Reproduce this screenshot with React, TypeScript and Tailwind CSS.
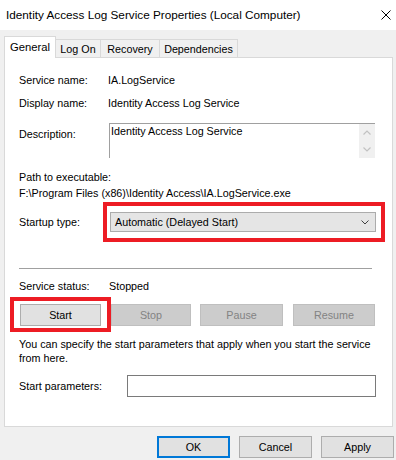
function Btn({ label, disabled, primary, w }: { label: string; disabled?: boolean; primary?: boolean; w: string }) {
  return (
    <div
      className={`h-[22px] ${w} flex items-center justify-center ${
        disabled
          ? 'bg-[#cccccc] border border-[#bfbfbf] text-[#838383]'
          : primary
            ? 'bg-[#e1e1e1] border-2 border-[#0078d7] text-black'
            : 'bg-[#e1e1e1] border border-[#adadad] text-black'
      }`}
    >
      {label}
    </div>
  );
}

export default function App() {
  const row = 'flex items-center h-[16px]';
  return (
    <div className="w-[396px] h-[460px] bg-[#f0f0f0] flex flex-col font-['Liberation_Sans',sans-serif] text-[10.75px] text-black leading-[16px]">
      {/* Barra de título */}
      <div className="h-[30px] bg-white flex items-center justify-between pl-[6px] pr-[5px]">
        <span className="text-[11.75px]">Identity Access Log Service Properties (Local Computer)</span>
        <svg width="10" height="10" viewBox="0 0 10 10">
          <path d="M0.5 0.5 L9.5 9.5 M9.5 0.5 L0.5 9.5" stroke="#000" strokeWidth="1" />
        </svg>
      </div>

      {/* Abas */}
      <div className="flex items-end pl-[4px] mt-[6px] h-[22px] relative z-10">
        <div className="w-[52px] h-[22px] bg-white border border-b-0 border-[#d9d9d9] flex items-start justify-center pt-[2px] text-[11.25px]">
          General
        </div>
        <div className="w-[45px] h-[19px] border border-l-0 border-b-0 border-[#d9d9d9] flex items-center justify-center">Log On</div>
        <div className="w-[59px] h-[19px] border border-l-0 border-b-0 border-[#d9d9d9] flex items-center justify-center">Recovery</div>
        <div className="w-[78px] h-[19px] border border-l-0 border-b-0 border-[#d9d9d9] flex items-center justify-center">Dependencies</div>
      </div>

      {/* Painel */}
      <div className="mx-[4px] mr-[3px] -mt-[1px] h-[370px] bg-white border border-[#d9d9d9] pl-[14px] flex flex-col">
        <div className={`${row} mt-[14px]`}>
          <span className="w-[89px]">Service name:</span>
          <span>IA.LogService</span>
        </div>
        <div className={`${row} mt-[7px]`}>
          <span className="w-[89px]">Display name:</span>
          <span>Identity Access Log Service</span>
        </div>
        <div className="flex items-start mt-[12px]">
          <span className="w-[90px] mt-[3px]">Description:</span>
          <div className="w-[266px] h-[35px] flex border-t border-l border-[#a0a0a0]">
            <div className="flex-1 pl-[1px] leading-[14px]">Identity Access Log Service</div>
            <div className="w-[16px] bg-[#f0f0f0] flex flex-col items-center justify-between py-[6px]">
              <svg width="8" height="5" viewBox="0 0 8 5">
                <path d="M0.5 4.5 L4 1 L7.5 4.5" stroke="#c2c2c2" strokeWidth="1.2" fill="none" />
              </svg>
              <svg width="8" height="5" viewBox="0 0 8 5">
                <path d="M0.5 0.5 L4 4 L7.5 0.5" stroke="#c2c2c2" strokeWidth="1.2" fill="none" />
              </svg>
            </div>
          </div>
        </div>
        <div className={`${row} mt-[11px]`}>Path to executable:</div>
        <div className={row}>F:\Program Files (x86)\Identity Access\IA.LogService.exe</div>

        <div className="flex items-center mt-[1px]">
          <span className="w-[84px]">Startup type:</span>
          <div className="border-[4px] border-[#ed1c24] pt-[6px] pb-[6px] pl-[3px] pr-[5px]">
            <div className="w-[266px] h-[20px] bg-[#e5e5e5] border border-[#acacac] flex items-center justify-between pl-[4px] pr-[6px]">
              <span>Automatic (Delayed Start)</span>
              <svg width="8" height="5" viewBox="0 0 8 5">
                <path d="M0.5 0.5 L4 4 L7.5 0.5" stroke="#404040" strokeWidth="1" fill="none" />
              </svg>
            </div>
          </div>
        </div>

        <div className="mt-[26px] w-[353px] h-[1px] bg-[#a0a0a0]" />

        <div className={`${row} mt-[9px]`}>
          <span className="w-[90px]">Service status:</span>
          <span>Stopped</span>
        </div>

        <div className="flex mt-[10px] gap-[9px] pl-[1px]">
          <div className="relative">
            <Btn label="Start" w="w-[81px]" />
            <div className="absolute -left-[10px] -top-[7px] -right-[10px] -bottom-[6px] border-[4px] border-[#ed1c24]" />
          </div>
          <div className="ml-[1px]">
            <Btn label="Stop" w="w-[80px]" disabled />
          </div>
          <Btn label="Pause" w="w-[83px]" disabled />
          <div className="ml-[1px]">
            <Btn label="Resume" w="w-[82px]" disabled />
          </div>
        </div>

        <p className="mt-[11px] leading-[14px] w-[360px]">
          You can specify the start parameters that apply when you start the service from here.
        </p>

        <div className="flex items-center mt-[10px]">
          <span className="w-[108px]">Start parameters:</span>
          <div className="w-[249px] h-[22px] bg-white border border-[#7a7a7a]" />
        </div>
      </div>

      {/* Botões inferiores */}
      <div className="flex justify-end gap-[9px] pr-[2px] mt-[9px]">
        <Btn label="OK" w="w-[73px]" primary />
        <Btn label="Cancel" w="w-[73px]" />
        <Btn label="Apply" w="w-[73px]" />
      </div>
    </div>
  );
}
